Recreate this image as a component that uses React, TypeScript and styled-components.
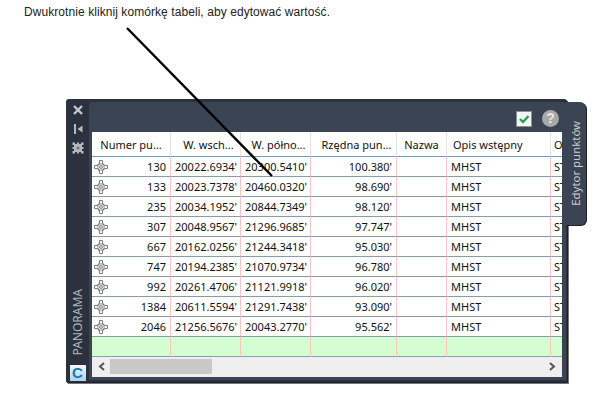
import React from "react";
import styled, { createGlobalStyle } from "styled-components";

const Global = createGlobalStyle`
  html, body { margin: 0; padding: 0; background: #fff; }
  #root { width: 600px; height: 400px; overflow: hidden; }
`;
const Page = styled.div`
  position: relative; width: 600px; height: 400px; box-sizing: border-box; background: #fff;
  display: flex; flex-direction: column; padding: 4px 0 0 24px;
`;
const Caption = styled.p`
  margin: 0; height: 16px; font: 12px/16px "Liberation Sans", Arial, sans-serif; letter-spacing: 0.07px; color: #222;
`;
const Leader = styled.svg`
  position: absolute; left: 0; top: 0; width: 600px; height: 400px; pointer-events: none; z-index: 3;
`;
const Frame = styled.div`
  display: flex; align-items: flex-start; margin: 79px 0 0 42px;
`;
const Panel = styled.section`
  width: 501px; height: 283px; box-sizing: border-box; display: flex; background: #2b323e;
  border-radius: 3px 3px 0 0; box-shadow: 1px 1px 0 #1e2229, 2px 2px 0 #777;
`;
const Side = styled.aside`
  width: 23px; flex: none; display: flex; flex-direction: column; align-items: center;
  padding: 5px 0 1px;
`;
const SideIcon = styled.svg`
  width: 12px; height: 12px; margin-bottom: 7px; display: block; flex: none;
`;
const SideTitle = styled.div`
  margin-top: auto; writing-mode: vertical-rl; transform: rotate(180deg);
  font: 12px/14px "Noto Sans", sans-serif; color: #aeb3bb; margin-bottom: 9px;
`;
const Logo = styled.div`
  width: 16px; height: 16px; background: linear-gradient(#f4f9fc, #a9d3ea); display: flex; align-items: center; justify-content: center;
  font: 900 15px/16px "Liberation Sans", sans-serif; color: #1878b4;
`;
const Body = styled.div`
  flex: 1; min-width: 0; display: flex; flex-direction: column; margin: 3px 1px 2px 0; padding: 0 4px 3px 3px;
  background: #3b4453; border-radius: 4px 4px 0 0;
`;
const Toolbar = styled.div`
  height: 30px; flex: none; display: flex; align-items: center; justify-content: flex-end; gap: 10px; padding: 3px 3px 0 0; box-sizing: border-box;
`;
const Check = styled.svg`
  width: 16px; height: 16px; display: block; background: #f4f5f5; border: 1px solid #8a8f98; box-sizing: border-box;
`;
const Help = styled.span`
  width: 17px; height: 17px; border-radius: 50%; background: #a8a8a8; color: #e8e8e8; text-align: center;
  font: bold 14px/17px "Liberation Sans", sans-serif;
`;
const Sheet = styled.div`
  flex: 1; min-height: 0; background: #fff; overflow: hidden; display: flex; flex-direction: column;
`;
const Grid = styled.table`
  border-collapse: separate; border-spacing: 0; table-layout: fixed; width: 470px;
  font: 11px/19px "Noto Sans", sans-serif; color: #111;
`;
const Head = styled.th<{ $left?: number; $align?: string }>`
  height: 25px; padding: 0 0 0 ${p => p.$left ?? 0}px; box-sizing: border-box; font-weight: 400; text-align: ${p => p.$align ?? "center"}; white-space: nowrap; overflow: hidden;
  border-right: 1px solid #e4e4e4; border-bottom: 1px solid #7b9ab5;
  &:last-child { border-right: 0; }
`;
const Row = styled.tr`
  height: 20px;
`;
const Cell = styled.td<{ $align?: string }>`
  height: 20px; padding: 0 4px; box-sizing: border-box; white-space: nowrap; overflow: hidden; text-align: ${p => p.$align ?? "right"};
  border-right: 1px solid #fcc4c4; border-bottom: 1px solid #8a9bab;
  &:first-child { padding-left: 1px; }
  &:last-child { border-right: 0; padding: 0 0 0 3px; }
`;
const IconWrap = styled.span`
  float: left; height: 19px; display: flex; align-items: center;
`;
const Green = styled.td`
  height: 20px; background: #d5fdd2; padding: 0; box-sizing: border-box; border-right: 1px solid #fcc4c4; border-bottom: 1px solid #8a9bab;
  &:last-child { border-right: 0; }
`;
const Scrollbar = styled.div`
  height: 20px; flex: none; background: #efefef; display: flex; align-items: center; justify-content: space-between; padding: 0 6px 2px 6px; box-sizing: border-box;
`;
const ThumbTrack = styled.div`
  flex: 1; height: 15px; margin: 0 0 0 4px; display: flex;
`;
const Thumb = styled.div`
  width: 102px; height: 15px; background: #c8c8c8;
`;
const Arrow = styled.svg`
  width: 8px; height: 9px; display: block;
`;
const Tab = styled.div`
  width: 20px; height: 123px; margin-top: 3px; margin-left: -1px; background: #3b4453; border-radius: 0 6px 6px 0; box-shadow: 1px 1px 0 #1e2229;
  display: flex; align-items: center; justify-content: center;
`;
const TabLabel = styled.span`
  writing-mode: vertical-rl; transform: rotate(180deg);
  font: 11.4px/14px "Noto Sans", sans-serif; color: #c9ced4;
`;

const Marker = () => (
  <svg width="16" height="16" viewBox="0 0 16 16" fill="none" stroke="#7c7c7c" strokeWidth="1">
    <path d="M6.5 4.5 H9.5 L11.5 6.5 V9.5 L9.5 11.5 H6.5 L4.5 9.5 V6.5 Z" strokeWidth="1.4" fill="#e8e8e8" />
    <circle cx="8" cy="8" r="1.4" fill="#fff" />
    <path d="M6.5 4.5 V1.5 H9.5 V4.5 M6.5 11.5 V14.5 H9.5 V11.5 M4.5 6.5 H1.5 V9.5 H4.5 M11.5 6.5 H14.5 V9.5 H11.5" fill="#fff" />
  </svg>
);

const rows = [
  ["130", "20022.6934'", "20300.5410'", "100.380'"],
  ["133", "20023.7378'", "20460.0320'", "98.690'"],
  ["235", "20034.1952'", "20844.7349'", "98.120'"],
  ["307", "20048.9567'", "21296.9685'", "97.747'"],
  ["667", "20162.0256'", "21244.3418'", "95.030'"],
  ["747", "20194.2385'", "21070.9734'", "96.780'"],
  ["992", "20261.4706'", "21121.9918'", "96.020'"],
  ["1384", "20611.5594'", "21291.7438'", "93.090'"],
  ["2046", "21256.5676'", "20043.2770'", "95.562'"],
];
const widths = [79, 70, 70, 86, 50, 104, 11];

export default function App() {
  return (
    <Page>
      <Global />
      <Caption>Dwukrotnie kliknij komórkę tabeli, aby edytować wartość.</Caption>
      <Frame>
        <Panel>
          <Side>
            <SideIcon viewBox="0 0 12 12"><path d="M2 2 L10 10 M10 2 L2 10" stroke="#c4c8ce" strokeWidth="2.4" /></SideIcon>
            <SideIcon viewBox="0 0 12 12"><path d="M2 1 H4 V11 H2 Z M10.5 2.5 V9.5 L5.5 6 Z" fill="#b4b9c0" /></SideIcon>
            <SideIcon viewBox="0 0 12 12"><path d="M0.5 0.5 H3 V2 H5 V0.5 H7 V2 H9 V0.5 H11.5 V3 H10 V5 H11.5 V7 H10 V9 H11.5 V11.5 H9 V10 H7 V11.5 H5 V10 H3 V11.5 H0.5 V9 H2 V7 H0.5 V5 H2 V3 H0.5 Z" fill="#b4b9c0" /><circle cx="6" cy="6" r="1.5" fill="#6a7180" /></SideIcon>
            <SideTitle>PANORAMA</SideTitle>
            <Logo>C</Logo>
          </Side>
          <Body>
            <Toolbar>
              <Check viewBox="0 0 14 14"><path d="M3 7 L6 10 L11.5 4" fill="none" stroke="#1fa84a" strokeWidth="2.4" /></Check>
              <Help>?</Help>
            </Toolbar>
            <Sheet>
              <Grid>
                <colgroup>{widths.map((w, i) => <col key={i} style={{ width: w }} />)}</colgroup>
                <thead>
                  <tr>
                    <Head>Numer pu...</Head>
                    <Head $left={6}>W. wsch...</Head>
                    <Head $left={6}>W. półno...</Head>
                    <Head $left={6}>Rzędna pun...</Head>
                    <Head>Nazwa</Head>
                    <Head $left={6} $align="left">Opis wstępny</Head>
                    <Head $left={3} $align="left">O</Head>
                  </tr>
                </thead>
                <tbody>
                  {rows.map(r => (
                    <Row key={r[0]}>
                      <Cell><IconWrap><Marker /></IconWrap>{r[0]}</Cell>
                      <Cell>{r[1]}</Cell>
                      <Cell>{r[2]}</Cell>
                      <Cell>{r[3]}</Cell>
                      <Cell />
                      <Cell $align="left">MHST</Cell>
                      <Cell $align="left">ST</Cell>
                    </Row>
                  ))}
                  <tr>{widths.map((_, i) => <Green key={i} />)}</tr>
                </tbody>
              </Grid>
              <Scrollbar>
                <Arrow viewBox="0 0 8 9"><path d="M6 1 L2 4.5 L6 8" fill="none" stroke="#555" strokeWidth="2" /></Arrow>
                <ThumbTrack><Thumb /></ThumbTrack>
                <Arrow viewBox="0 0 8 9"><path d="M2 1 L6 4.5 L2 8" fill="none" stroke="#555" strokeWidth="2" /></Arrow>
              </Scrollbar>
            </Sheet>
          </Body>
        </Panel>
        <Tab><TabLabel>Edytor punktów</TabLabel></Tab>
      </Frame>
      <Leader viewBox="0 0 600 400"><path d="M127 28 L272 176" stroke="#000" strokeWidth="2.4" /></Leader>
    </Page>
  );
}
